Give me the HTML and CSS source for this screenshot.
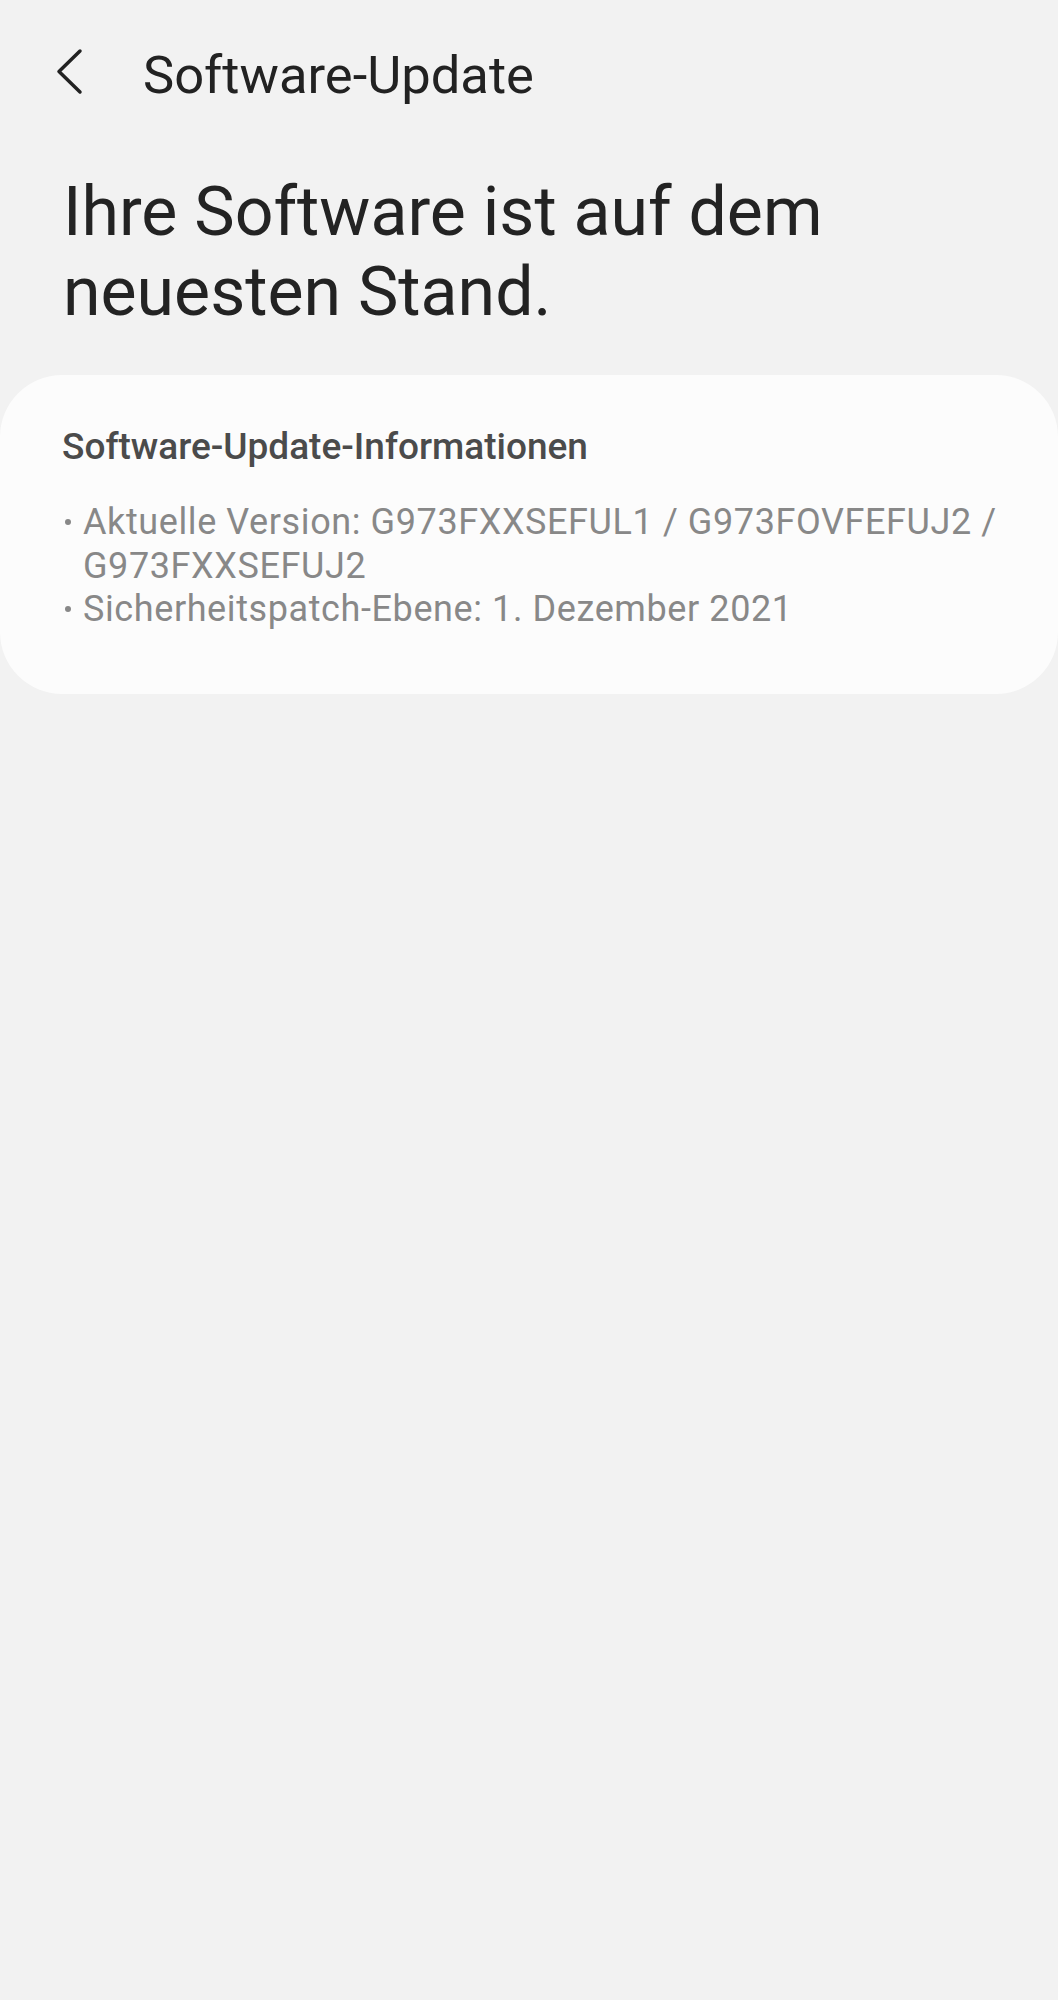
FILE: index.html
```html
<!DOCTYPE html>
<html lang="de">
<head>
    <meta charset="UTF-8">
    <meta name="viewport" content="width=device-width, initial-scale=1.0">
    <title>Software-Update</title>
    <link rel="stylesheet" href="styles.css">
</head>
<body>
    <div class="header">
        <svg class="back-icon" width="28" height="48" viewBox="0 0 28 48">
            <path d="M24 3 L3 23.5 L24 44" fill="none" stroke="#222" stroke-width="3.5" stroke-linecap="round" stroke-linejoin="round"/>
        </svg>
        <h1 class="header-title">Software-Update</h1>
    </div>

    <h2 class="status">Ihre Software ist auf dem neuesten Stand.</h2>

    <div class="card">
        <h3 class="card-title">Software-Update-Informationen</h3>
        <ul class="info-list">
            <li><span class="bullet"></span><span>Aktuelle Version: G973FXXSEFUL1 / G973FOVFEFUJ2 / G973FXXSEFUJ2</span></li>
            <li><span class="bullet"></span><span>Sicherheitspatch-Ebene: 1. Dezember 2021</span></li>
        </ul>
    </div>
</body>
</html>
```

FILE: styles.css
```css
* {
    margin: 0;
    padding: 0;
    box-sizing: border-box;
}

body {
    font-family: Roboto, "Noto Sans", sans-serif;
    background-color: #f2f2f2;
    color: #222;
}

.header {
    display: flex;
    align-items: flex-start;
    padding: 45px 0 0 56px;
}

.back-icon {
    margin-top: 3px;
    margin-right: 59px;
}

.header-title {
    font-size: 52.5px;
    font-weight: 400;
    line-height: 61px;
    color: #222;
}

.status {
    font-size: 68px;
    font-weight: 400;
    line-height: 80px;
    margin: 66px 62px 0 63px;
    color: #232323;
}

.card {
    margin-top: 43px;
    background-color: #fcfcfc;
    border-radius: 62px;
    padding: 48px 48px 62px 62px;
}

.card-title {
    font-size: 37px;
    font-weight: 500;
    line-height: 48px;
    color: #4b4b4b;
}

.info-list {
    list-style-type: none;
    margin-top: 30px;
}

.info-list li {
    display: flex;
    font-size: 36px;
    letter-spacing: 0.6px;
    line-height: 43.5px;
    color: #888;
}

.bullet {
    flex: none;
    width: 6px;
    height: 6px;
    margin: 18px 12px 0 3px;
    border-radius: 50%;
    background-color: #888;
}
```
